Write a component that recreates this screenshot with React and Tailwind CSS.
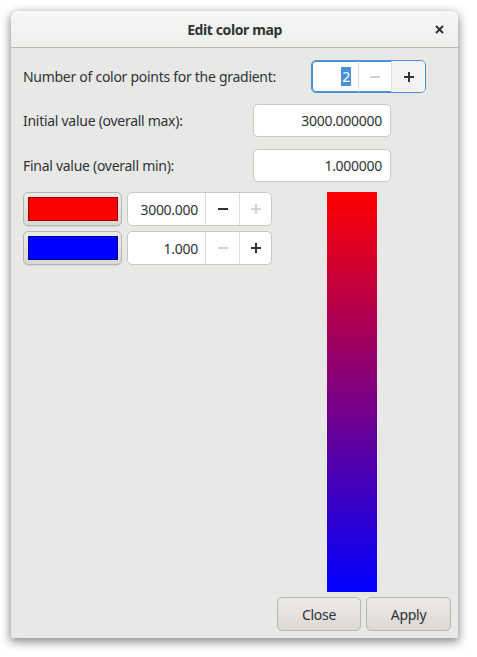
import React from 'react';

const font = { fontFamily: '"Noto Sans", "Open Sans", sans-serif' };

function Minus({ disabled }) {
  return (
    <svg width="12" height="12" viewBox="0 0 12 12">
      <rect x="1" y="5" width="10" height="2" fill={disabled ? '#d3d3d0' : '#2e3436'} />
    </svg>
  );
}

function Plus({ disabled }) {
  return (
    <svg width="12" height="12" viewBox="0 0 12 12">
      <rect x="1" y="5" width="10" height="2" fill={disabled ? '#d3d3d0' : '#2e3436'} />
      <rect x="5" y="1" width="2" height="10" fill={disabled ? '#d3d3d0' : '#2e3436'} />
    </svg>
  );
}

function SpinBox({ value, textW, minusW, plusW, minusOff, plusOff, focused, h }) {
  return (
    <div
      className={`flex rounded-[5px] bg-white border overflow-hidden ${
        focused
          ? 'border-[#4a90d9] shadow-[inset_0_0_0_1px_#4a90d9]'
          : 'border-[#cdc7c2]'
      }`}
      style={{ height: h }}
    >
      <div className="flex items-center justify-end pr-[7px]" style={{ width: textW }}>
        {focused ? (
          <span className="bg-[#4a90d9] text-white leading-[19px] px-[1px]">{value}</span>
        ) : (
          <span>{value}</span>
        )}
      </div>
      <div
        className="flex items-center justify-center border-l border-[#e0dedb]"
        style={{ width: minusW }}
      >
        <Minus disabled={minusOff} />
      </div>
      <div
        className={`flex items-center justify-center border-l border-[#e0dedb] ${
          focused ? 'bg-[#f3f3f3]' : ''
        }`}
        style={{ width: plusW }}
      >
        <Plus disabled={plusOff} />
      </div>
    </div>
  );
}

function Entry({ value }) {
  return (
    <div className="w-[138px] h-[33px] flex items-center justify-end pr-[8px] bg-white border border-[#cdc7c2] rounded-[5px]">
      {value}
    </div>
  );
}

function ColorButton({ color, edge }) {
  return (
    <div className="w-[99px] h-[34px] rounded-[5px] border border-[#b6b6b3] bg-gradient-to-b from-[#edebe9] to-[#dcd8d4] shadow-[0_1px_0_rgba(0,0,0,0.08)] flex items-center pl-[4px]">
      <div className="w-[90px] h-[24px] border" style={{ background: color, borderColor: edge }} />
    </div>
  );
}

function DialogButton({ label, w }) {
  return (
    <div
      className="h-[34px] flex items-center justify-center rounded-[5px] border border-[#b6b6b3] bg-gradient-to-b from-[#edebe9] to-[#dcd8d4]"
      style={{ width: w }}
    >
      {label}
    </div>
  );
}

export default function App() {
  return (
    <div className="w-[477px] h-[657px] bg-white pl-[11px] pt-[11px] text-[#2e3436] text-[14px] tracking-[-0.28px]" style={font}>
      <div className="w-[447px] h-[627px] flex flex-col rounded-t-[7px] shadow-[0_3px_10px_1px_rgba(0,0,0,0.45)]">
        {/* header bar */}
        <div className="h-[37px] flex items-center justify-center relative rounded-t-[7px] bg-gradient-to-b from-[#f7f7f7] to-[#efefee] border-b border-[#b6b6b3]">
          <span className="font-bold text-[14px] tracking-[-0.4px]">Edit color map</span>
          <div className="absolute right-[14px] top-[14px]">
            <svg width="9" height="9" viewBox="0 0 9 9">
              <path d="M1 1 L8 8 M8 1 L1 8" stroke="#2e3436" strokeWidth="2" />
            </svg>
          </div>
        </div>

        <div className="flex-1 flex flex-col bg-[#e8e8e7]">
          {/* settings rows */}
          <div className="flex flex-col pt-[12px] px-[12px]">
            <div className="flex items-center h-[33px]">
              <div className="flex-1">Number of color points for the gradient:</div>
              <div className="mr-[20px]">
                <SpinBox value="2" textW={46} minusW={33} plusW={34} minusOff plusOff={false} focused h={33} />
              </div>
            </div>
            <div className="flex items-center mt-[11px]">
              <div className="flex-1">Initial value (overall max):</div>
              <div className="mr-[55px]">
                <Entry value="3000.000000" />
              </div>
            </div>
            <div className="flex items-center mt-[12px]">
              <div className="flex-1">Final value (overall min):</div>
              <div className="mr-[55px]">
                <Entry value="1.000000" />
              </div>
            </div>
          </div>

          {/* color points + preview */}
          <div className="flex mt-[10px] px-[12px]">
            <div className="flex flex-col gap-[5px]">
              <div className="flex gap-[5px]">
                <ColorButton color="#ff0000" edge="#9a0000" />
                <SpinBox value="3000.000" textW={77} minusW={34} plusW={32} minusOff={false} plusOff h={34} />
              </div>
              <div className="flex gap-[5px]">
                <ColorButton color="#0000ff" edge="#00009a" />
                <SpinBox value="1.000" textW={77} minusW={34} plusW={32} minusOff plusOff={false} h={34} />
              </div>
            </div>
            <div className="ml-[55px] w-[50px] h-[400px] bg-[linear-gradient(to_bottom,#ff0000,#0000ff)]" />
          </div>

          {/* action buttons */}
          <div className="flex justify-end gap-[5px] mt-[5px] pr-[7px]">
            <DialogButton label="Close" w={84} />
            <DialogButton label="Apply" w={85} />
          </div>
        </div>
      </div>
    </div>
  );
}
